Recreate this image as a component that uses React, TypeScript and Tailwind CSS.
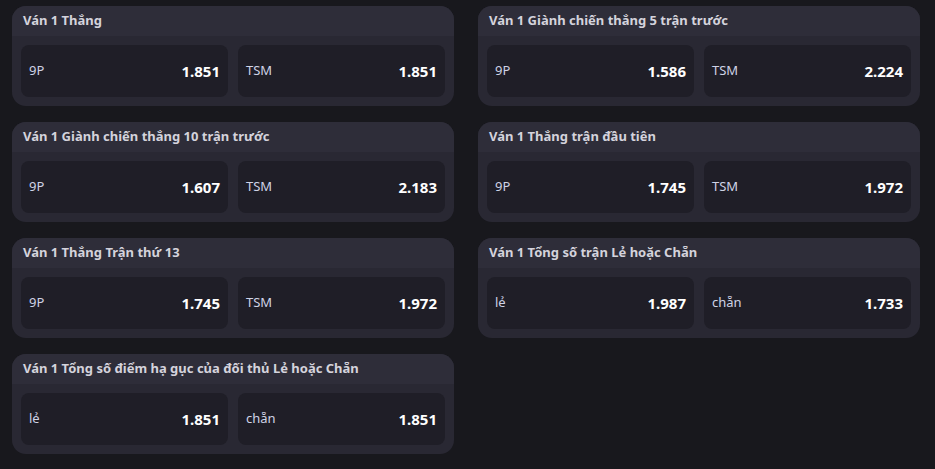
import React from "react";

type Market = {
  title: string;
  options: { label: string; odds: string }[];
};

const markets: Market[] = [
  { title: "Ván 1 Thắng", options: [{ label: "9P", odds: "1.851" }, { label: "TSM", odds: "1.851" }] },
  { title: "Ván 1 Giành chiến thắng 5 trận trước", options: [{ label: "9P", odds: "1.586" }, { label: "TSM", odds: "2.224" }] },
  { title: "Ván 1 Giành chiến thắng 10 trận trước", options: [{ label: "9P", odds: "1.607" }, { label: "TSM", odds: "2.183" }] },
  { title: "Ván 1 Thắng trận đầu tiên", options: [{ label: "9P", odds: "1.745" }, { label: "TSM", odds: "1.972" }] },
  { title: "Ván 1 Thắng Trận thứ 13", options: [{ label: "9P", odds: "1.745" }, { label: "TSM", odds: "1.972" }] },
  { title: "Ván 1 Tổng số trận Lẻ hoặc Chẵn", options: [{ label: "lẻ", odds: "1.987" }, { label: "chẵn", odds: "1.733" }] },
  { title: "Ván 1 Tổng số điểm hạ gục của đối thủ Lẻ hoặc Chẵn", options: [{ label: "lẻ", odds: "1.851" }, { label: "chẵn", odds: "1.851" }] },
];

function MarketCard({ market }: { market: Market }) {
  return (
    <div className="h-[100px] overflow-hidden rounded-[14px] bg-[#292833]">
      <div className="flex h-[30px] items-center bg-[#2e2d39] px-[11px] text-[13px] font-bold text-[#d4d3dc]">
        {market.title}
      </div>
      <div className="grid grid-cols-2 gap-[10px] p-[9px]">
        {market.options.map((opt) => (
          <div
            key={opt.label}
            className="flex h-[52px] items-center justify-between rounded-[8px] bg-[#1f1e27] px-[8px]"
          >
            <span className="text-[13px] text-[#cfd3e6]">{opt.label}</span>
            <span className="text-[15px] font-bold text-white">{opt.odds}</span>
          </div>
        ))}
      </div>
    </div>
  );
}

export default function App() {
  return (
    <div
      className="min-h-screen bg-[#18181d] pl-[12px] pr-[15px] pt-[6px]"
      style={{ fontFamily: '"Noto Sans", sans-serif' }}
    >
      <div className="grid grid-cols-2 gap-x-[24px] gap-y-[16px]">
        {markets.map((m) => (
          <MarketCard key={m.title} market={m} />
        ))}
      </div>
    </div>
  );
}
